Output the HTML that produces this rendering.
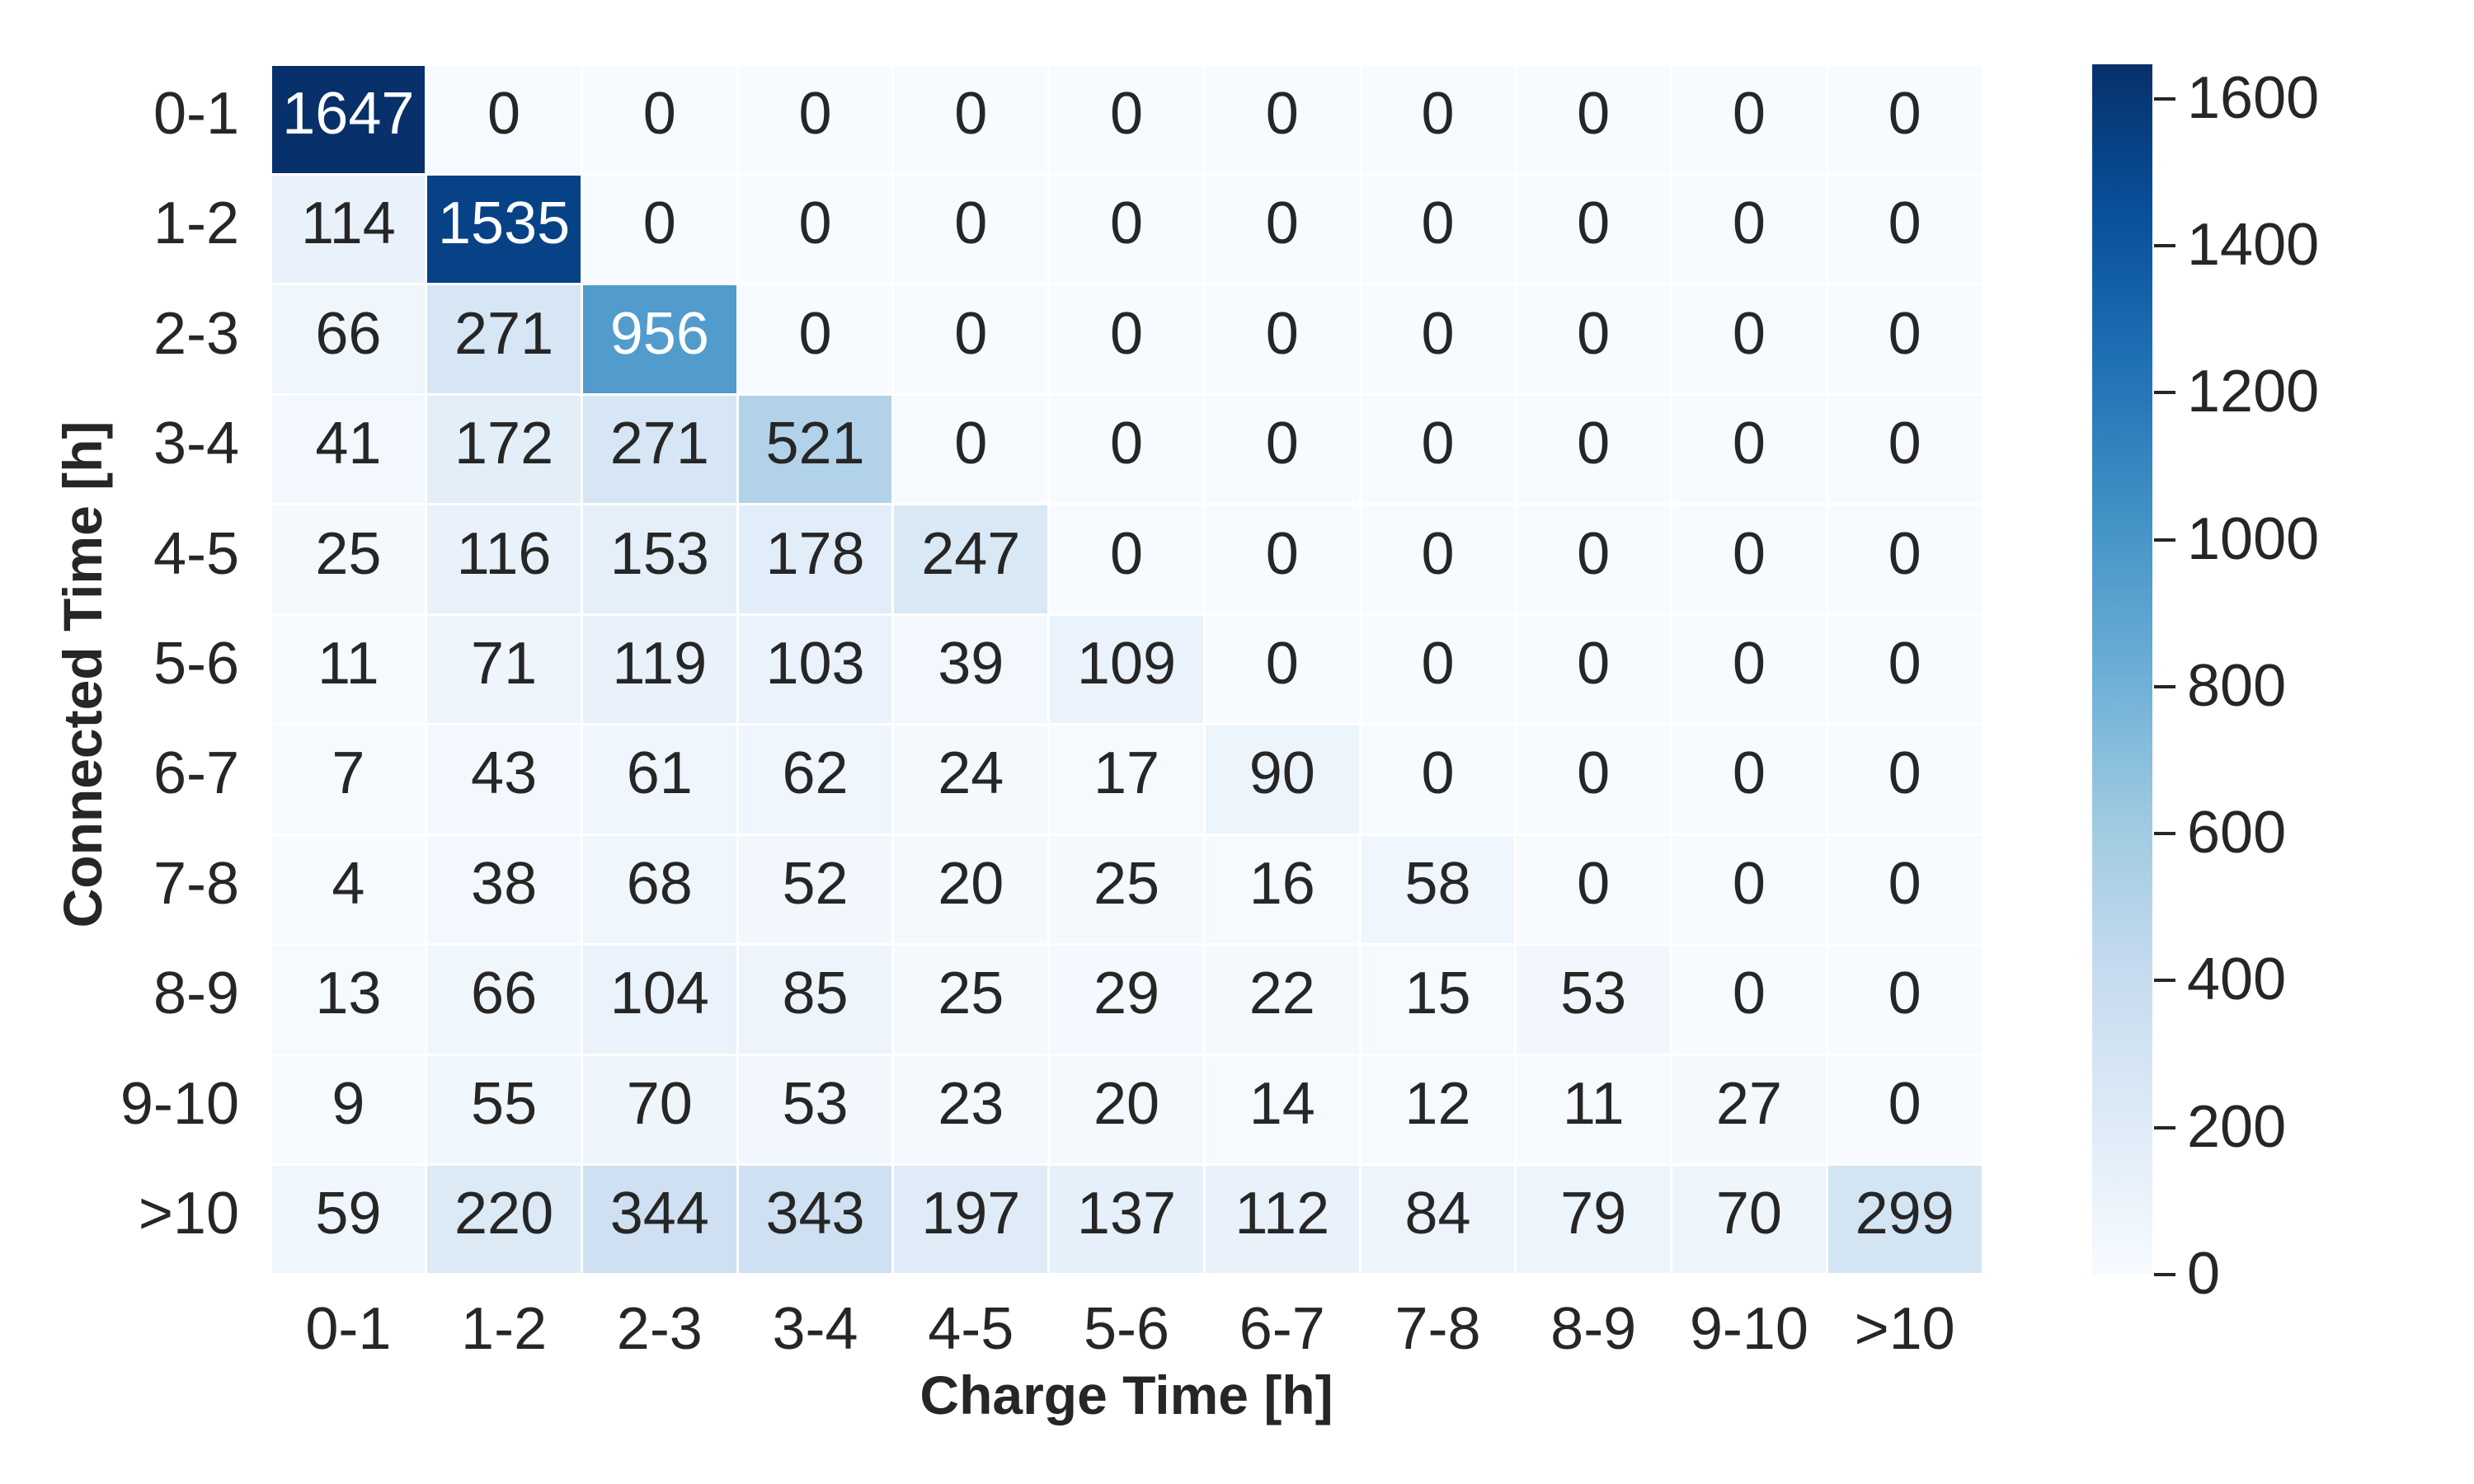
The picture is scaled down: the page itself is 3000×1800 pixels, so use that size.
<!DOCTYPE html>
<html><head><meta charset="utf-8"><style>
html,body{margin:0;padding:0;background:#fff;}
body{width:3000px;height:1800px;position:relative;overflow:hidden;font-family:"Liberation Sans",Arial,sans-serif;color:#262626;}
.c{position:absolute;display:flex;align-items:center;justify-content:center;font-size:72px;}
.c span{position:relative;top:-7px;}
.t{position:absolute;font-size:72px;line-height:1;}
</style></head><body>
<div id="hm"></div>
<div style="position:absolute;left:2537px;top:78px;width:73px;height:1468px;background:linear-gradient(to top,#f7fbff 0%,#deebf7 12.5%,#c6dbef 25%,#9ecae1 37.5%,#6baed6 50%,#4292c6 62.5%,#2171b5 75%,#08519c 87.5%,#08306b 100%);"></div>
<div style="position:absolute;left:20px;top:818px;width:0;height:0;">
<div style="position:absolute;transform:translate(-50%,-50%) rotate(-90deg);left:80px;top:0;white-space:nowrap;font-weight:bold;font-size:66px;">Connected Time [h]</div></div>
<div style="position:absolute;left:328px;width:2076px;top:1654px;text-align:center;font-weight:bold;font-size:66px;">Charge Time [h]</div>
<script>
var d=[[1647,0,0,0,0,0,0,0,0,0,0],[114,1535,0,0,0,0,0,0,0,0,0],[66,271,956,0,0,0,0,0,0,0,0],[41,172,271,521,0,0,0,0,0,0,0],[25,116,153,178,247,0,0,0,0,0,0],[11,71,119,103,39,109,0,0,0,0,0],[7,43,61,62,24,17,90,0,0,0,0],[4,38,68,52,20,25,16,58,0,0,0],[13,66,104,85,25,29,22,15,53,0,0],[9,55,70,53,23,20,14,12,11,27,0],[59,220,344,343,197,137,112,84,79,70,299]];
var labs=["0-1","1-2","2-3","3-4","4-5","5-6","6-7","7-8","8-9","9-10",">10"];
var st=["f7fbff","deebf7","c6dbef","9ecae1","6baed6","4292c6","2171b5","08519c","08306b"].map(function(h){return [parseInt(h.substr(0,2),16),parseInt(h.substr(2,2),16),parseInt(h.substr(4,2),16)];});
function col(v){var f=Math.min(1,v/1647)*8,i=Math.min(7,Math.floor(f)),t=f-i;var c=[0,1,2].map(function(k){return Math.round(st[i][k]+(st[i+1][k]-st[i][k])*t);});return c;}
function lum(c){var r=c.map(function(x){x/=255;return x<=0.03928?x/12.92:Math.pow((x+0.055)/1.055,2.4);});return 0.2126*r[0]+0.7152*r[1]+0.0722*r[2];}
var L=328,T=78,W=188.73,H=133.45,h="";
for(var r=0;r<11;r++)for(var k=0;k<11;k++){var c=col(d[r][k]);var x=L+k*W,y=T+r*H;
h+='<div class="c" style="left:'+(x+1.5)+'px;top:'+(y+1.5)+'px;width:'+(W-3)+'px;height:'+(H-3)+'px;background:rgb('+c+');color:'+(lum(c)<0.408?'#fff':'#262626')+'"><span>'+d[r][k]+'</span></div>';}
for(var i=0;i<11;i++){
h+='<div class="t" style="right:'+(3000-290)+'px;top:'+(T+i*H+H/2-43)+'px;">'+labs[i].replace('>','&gt;')+'</div>';
h+='<div class="t" style="left:'+(L+i*W)+'px;width:'+W+'px;text-align:center;top:1576px;">'+labs[i].replace('>','&gt;')+'</div>';}
for(var v=0;v<=1600;v+=200){var y=1546-v*1468/1647;
h+='<div style="position:absolute;left:2612px;top:'+(y-2)+'px;width:26px;height:4px;background:#262626"></div>';
h+='<div class="t" style="left:2652px;top:'+(y-37)+'px;">'+v+'</div>';}
document.getElementById('hm').innerHTML=h;
</script>
</body></html>
